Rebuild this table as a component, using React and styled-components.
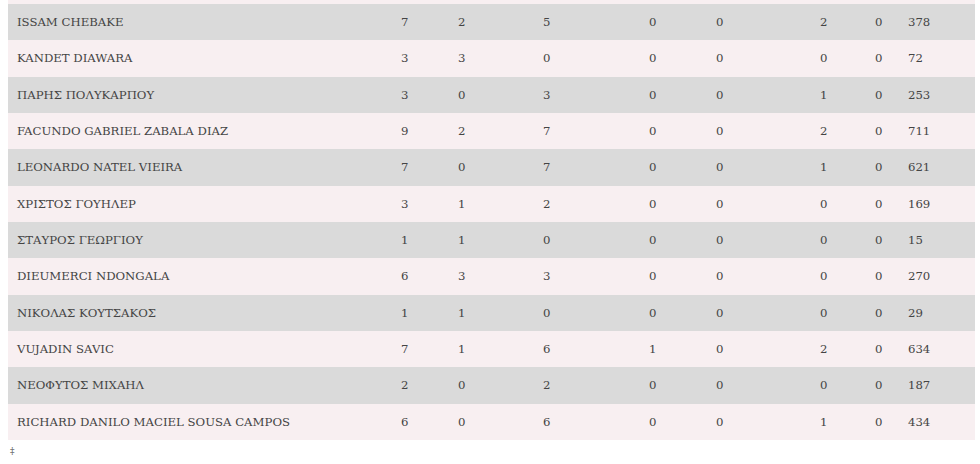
import styled, { createGlobalStyle } from "styled-components";

const GlobalStyle = createGlobalStyle`
  body {
    margin: 0;
    padding: 0 8px;
    background: #ffffff;
    font-family: "DejaVu Serif", "Liberation Serif", serif;
  }
`;

const players = [
  ["ISSAM CHEBAKE", 7, 2, 5, 0, 0, 2, 0, 378],
  ["KANDET DIAWARA", 3, 3, 0, 0, 0, 0, 0, 72],
  ["ΠΑΡΗΣ ΠΟΛΥΚΑΡΠΟΥ", 3, 0, 3, 0, 0, 1, 0, 253],
  ["FACUNDO GABRIEL ZABALA DIAZ", 9, 2, 7, 0, 0, 2, 0, 711],
  ["LEONARDO NATEL VIEIRA", 7, 0, 7, 0, 0, 1, 0, 621],
  ["ΧΡΙΣΤΟΣ ΓΟΥΗΛΕΡ", 3, 1, 2, 0, 0, 0, 0, 169],
  ["ΣΤΑΥΡΟΣ ΓΕΩΡΓΙΟΥ", 1, 1, 0, 0, 0, 0, 0, 15],
  ["DIEUMERCI NDONGALA", 6, 3, 3, 0, 0, 0, 0, 270],
  ["ΝΙΚΟΛΑΣ ΚΟΥΤΣΑΚΟΣ", 1, 1, 0, 0, 0, 0, 0, 29],
  ["VUJADIN SAVIC", 7, 1, 6, 1, 0, 2, 0, 634],
  ["ΝΕΟΦΥΤΟΣ ΜΙΧΑΗΛ", 2, 0, 2, 0, 0, 0, 0, 187],
  ["RICHARD DANILO MACIEL SOUSA CAMPOS", 6, 0, 6, 0, 0, 1, 0, 434],
];

const colWidths = [384, 57, 85, 106, 67, 104, 55, 33, 76];

export default function App() {
  return (
    <>
      <GlobalStyle />
      <Wrapper>
        <Table>
          <colgroup>
            {colWidths.map((w, i) => (
              <col key={i} style={{ width: w }} />
            ))}
          </colgroup>
          <tbody>
            {players.map((p, i) => (
              <Row key={p[0]} $odd={i % 2 === 0}>
                {p.map((v, j) => (
                  <Cell key={j}>{v}</Cell>
                ))}
              </Row>
            ))}
          </tbody>
        </Table>
        <Note>‡</Note>
      </Wrapper>
    </>
  );
}

const Wrapper = styled.div`
  width: 967px;
  border-top: 4px solid #f8eff1;
`;

const Table = styled.table`
  width: 967px;
  table-layout: fixed;
  border-collapse: collapse;
  border-spacing: 0;
`;

const Row = styled.tr`
  height: 36.33px;
  background: ${(p) => (p.$odd ? "#dadada" : "#f8eff1")};
`;

const Cell = styled.td`
  padding: 0 9px;
  font-size: 11.7px;
  color: #444;
  text-align: left;
  white-space: nowrap;
  vertical-align: middle;
`;

const Note = styled.div`
  font-size: 9px;
  color: #555;
  padding: 6px 0 0 2px;
  line-height: 10px;
`;
